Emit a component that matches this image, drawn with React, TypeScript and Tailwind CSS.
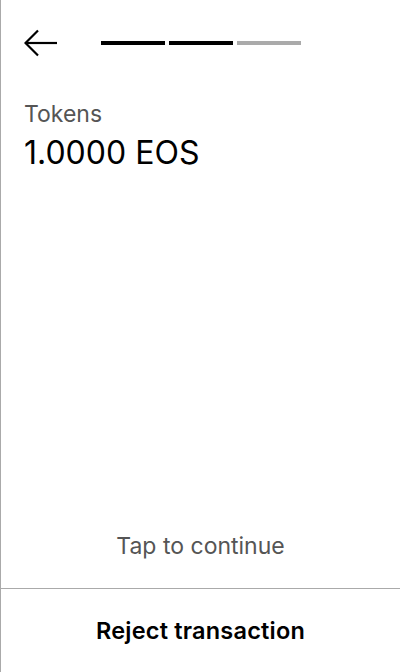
import React from "react";

export default function App() {
  return (
    <div
      className="w-[400px] h-[672px] bg-white border-l border-[#aaaaaa] flex flex-col"
      style={{ fontFamily: "Inter, 'Noto Sans', sans-serif" }}
    >
      <div className="flex items-center h-[86px] pl-[23px]">
        <svg width="33" height="28" viewBox="0 0 33 28" fill="none" stroke="black" strokeWidth="2.2">
          <path d="M1.5 14 H33" />
          <path d="M14 1.5 L1.5 14 L14 26.5" />
        </svg>
        <div className="flex gap-[4px] ml-[44px]">
          <div className="w-[64px] h-[4px] bg-black" />
          <div className="w-[64px] h-[4px] bg-black" />
          <div className="w-[64px] h-[4px] bg-[#aaaaaa]" />
        </div>
      </div>
      <div className="pl-[23px] pt-[14px]">
        <div className="text-[23px] leading-[28px] text-[#555555]">Tokens</div>
        <div className="text-[32px] leading-[36px] text-black mt-[7px]">1.0000 EOS</div>
      </div>
      <div className="flex-1" />
      <div className="text-center text-[23px] leading-[28px] text-[#555555] mb-[28px]">Tap to continue</div>
      <div className="border-t border-[#aaaaaa] h-[84px] flex items-center justify-center">
        <span className="text-[23.5px] leading-[28px] font-semibold text-black tracking-[0.2px]">Reject transaction</span>
      </div>
    </div>
  );
}
